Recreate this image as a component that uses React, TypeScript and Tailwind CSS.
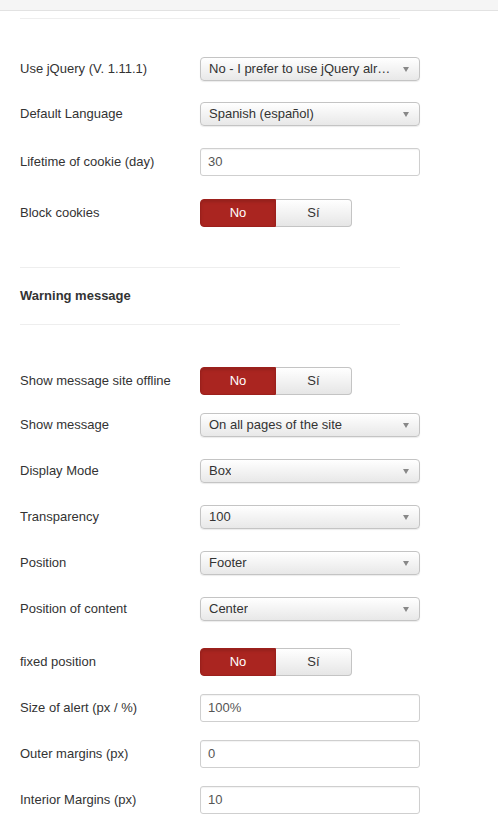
import React from "react";

function Label({ children }: { children: React.ReactNode }) {
  return <div className="w-[180px] shrink-0 text-[13px] text-[#333]">{children}</div>;
}

function SelectRow({ label, value, mt }: { label: string; value: string; mt: string }) {
  return (
    <div className={`flex items-center h-[24px] ${mt}`}>
      <Label>{label}</Label>
      <div className="w-[220px] h-[24px] flex items-center justify-between pl-[8px] pr-[10px] border border-[#c4c4c4] rounded-[4px] bg-gradient-to-b from-white to-[#e8e8e8] shadow-[0_1px_1px_rgba(0,0,0,0.08)] text-[13px] text-[#333]">
        <span className="whitespace-nowrap overflow-hidden">{value}</span>
        <span className="w-0 h-0 border-l-[3.5px] border-r-[3.5px] border-t-[5px] border-l-transparent border-r-transparent border-t-[#888] shrink-0" />
      </div>
    </div>
  );
}

function InputRow({ label, value, mt }: { label: string; value: string; mt: string }) {
  return (
    <div className={`flex items-center h-[28px] ${mt}`}>
      <Label>{label}</Label>
      <div className="w-[220px] h-[28px] flex items-center pl-[7px] border border-[#cfcfcf] rounded-[3px] bg-white shadow-[inset_0_1px_1px_rgba(0,0,0,0.05)] text-[13px] text-[#555]">
        {value}
      </div>
    </div>
  );
}

function ToggleRow({ label, mt }: { label: string; mt: string }) {
  return (
    <div className={`flex items-center h-[28px] ${mt}`}>
      <Label>{label}</Label>
      <div className="flex w-[152px] h-[28px] text-[13px]">
        <div className="w-[76px] h-full flex items-center justify-center rounded-l-[4px] bg-[#aa2520] border border-[#9c201c] text-white shadow-[inset_0_2px_3px_rgba(0,0,0,0.12)]">
          No
        </div>
        <div className="w-[76px] h-full flex items-center justify-center rounded-r-[4px] bg-gradient-to-b from-white to-[#e6e6e6] border border-l-0 border-[#c4c4c4] text-[#333]">
          Sí
        </div>
      </div>
    </div>
  );
}

export default function App() {
  return (
    <div className="w-[498px] h-[822px] bg-white overflow-hidden font-['Liberation_Sans',Arial,sans-serif] text-[13px] text-[#333]">
      <div className="h-[11px] bg-[#f5f5f5] border-b border-[#e2e2e2]" />
      <div className="pl-[20px]">
        <div className="w-[380px] mt-[7px] border-t border-[#eeeeee]" />
        <SelectRow label="Use jQuery (V. 1.11.1)" value="No - I prefer to use jQuery alr…" mt="mt-[38px]" />
        <SelectRow label="Default Language" value="Spanish (español)" mt="mt-[21px]" />
        <InputRow label="Lifetime of cookie (day)" value="30" mt="mt-[22px]" />
        <ToggleRow label="Block cookies" mt="mt-[23px]" />
        <div className="w-[380px] mt-[40px] border-t border-[#eeeeee]" />
        <div className="h-[56px] flex items-center font-bold text-[13px] text-[#333]">Warning message</div>
        <div className="w-[380px] border-t border-[#eeeeee]" />
        <ToggleRow label="Show message site offline" mt="mt-[42px]" />
        <SelectRow label="Show message" value="On all pages of the site" mt="mt-[18px]" />
        <SelectRow label="Display Mode" value="Box" mt="mt-[22px]" />
        <SelectRow label="Transparency" value="100" mt="mt-[22px]" />
        <SelectRow label="Position" value="Footer" mt="mt-[22px]" />
        <SelectRow label="Position of content" value="Center" mt="mt-[22px]" />
        <ToggleRow label="fixed position" mt="mt-[27px]" />
        <InputRow label="Size of alert (px / %)" value="100%" mt="mt-[18px]" />
        <InputRow label="Outer margins (px)" value="0" mt="mt-[18px]" />
        <InputRow label="Interior Margins (px)" value="10" mt="mt-[18px]" />
      </div>
    </div>
  );
}
